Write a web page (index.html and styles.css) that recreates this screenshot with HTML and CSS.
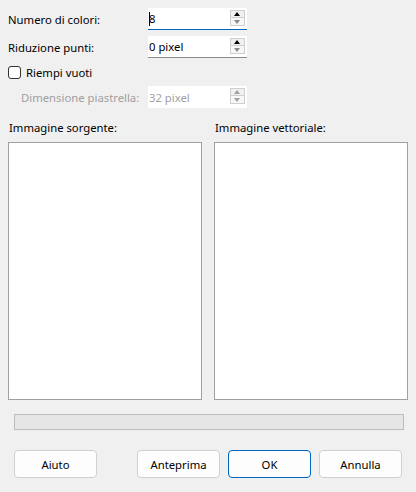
FILE: index.html
```html
<!DOCTYPE html>
<html lang="it">
<head>
<meta charset="utf-8">
<title>Vettorizza</title>
<link rel="stylesheet" href="styles.css">
</head>
<body>
<div class="dialog">
  <div class="row">
    <span class="label">Numero di colori:</span>
    <div class="spin focused">
      <span class="value"><span class="caret"></span>8</span>
      <span class="btns"><span class="up"></span><span class="down"></span></span>
    </div>
  </div>
  <div class="row">
    <span class="label">Riduzione punti:</span>
    <div class="spin">
      <span class="value">0 pixel</span>
      <span class="btns"><span class="up"></span><span class="down"></span></span>
    </div>
  </div>
  <div class="row check-row">
    <span class="checkbox"></span>
    <span class="check-label">Riempi vuoti</span>
  </div>
  <div class="row disabled">
    <span class="label indent">Dimensione piastrella:</span>
    <div class="spin">
      <span class="value">32 pixel</span>
      <span class="btns"><span class="up"></span><span class="down"></span></span>
    </div>
  </div>

  <div class="panels">
    <div class="panel">
      <div class="panel-title">Immagine sorgente:</div>
      <div class="panel-box"></div>
    </div>
    <div class="panel">
      <div class="panel-title">Immagine vettoriale:</div>
      <div class="panel-box"></div>
    </div>
  </div>

  <div class="progress"></div>

  <div class="buttons">
    <button class="btn">Aiuto</button>
    <div class="spacer"></div>
    <button class="btn">Anteprima</button>
    <button class="btn default">OK</button>
    <button class="btn">Annulla</button>
  </div>
</div>
</body>
</html>
```
FILE: styles.css
```css
html, body {
  margin: 0;
  padding: 0;
  background: #f0f0f0;
}
body {
  font-family: "Noto Sans", "Open Sans", sans-serif;
  font-size: 11.3px;
  color: #000;
  width: 416px;
  height: 492px;
  overflow: hidden;
}
.dialog {
  padding: 8px 0 0 0;
  display: flex;
  flex-direction: column;
}
.row {
  display: flex;
  align-items: center;
  height: 22px;
  padding-left: 8px;
  margin-bottom: 6px;
}
.label {
  width: 140px;
  flex: none;
}
.label.indent {
  padding-left: 13px;
  width: 127px;
}
.spin {
  position: relative;
  width: 99px;
  height: 22px;
  background: #fff;
  box-sizing: border-box;
  border-bottom: 1px solid #8a8a8a;
  display: flex;
  align-items: center;
}
.spin.focused {
  border-bottom: 1px solid #0067c0;
}
.value {
  padding-left: 1px;
  display: flex;
  align-items: center;
  position: relative;
}
.caret {
  position: absolute;
  left: 1px;
  top: 1px;
  width: 1px;
  height: 14px;
  background: #000;
}
.btns {
  position: absolute;
  left: 82px;
  top: 2px;
  width: 15px;
  display: flex;
  flex-direction: column;
}
.btns span {
  height: 8px;
  box-sizing: border-box;
  border: 1px solid #cfcfcf;
  background: #f0f0f0;
  position: relative;
}
.btns .down {
  border-top: none;
  background: #f7f7f7;
}
.btns .up::after,
.btns .down::after {
  content: "";
  position: absolute;
  left: 3px;
  width: 0;
  height: 0;
  border-left: 3.5px solid transparent;
  border-right: 3.5px solid transparent;
}
.btns .up::after {
  top: 1px;
  border-bottom: 4px solid #000;
}
.btns .down::after {
  top: 2px;
  border-top: 4px solid #8a8a8a;
}
.check-row {
  height: 14px;
  margin: 1px 0 7px 0;
}
.checkbox {
  width: 13px;
  height: 13px;
  box-sizing: border-box;
  border: 1px solid #333;
  border-radius: 3px;
  background: #fff;
  margin-right: 5px;
}
.disabled .label,
.disabled .value {
  color: #a0a0a0;
}
.disabled .spin {
  border-bottom: none;
}
.disabled .btns .up::after {
  border-bottom-color: #a0a0a0;
}
.disabled .btns .down::after {
  border-top-color: #a0a0a0;
}
.panels {
  display: flex;
  gap: 12px;
  padding: 7px 8px 0 8px;
}
.panel {
  width: 194px;
  display: flex;
  flex-direction: column;
}
.panel-title {
  height: 14px;
  line-height: 14px;
  padding-left: 1px;
  margin-bottom: 7px;
}
.panel-box {
  height: 258px;
  background: #fff;
  border: 1px solid #a0a0a0;
  box-sizing: border-box;
}
.progress {
  margin: 14px 12px 0 14px;
  height: 16px;
  box-sizing: border-box;
  background: #e6e6e6;
  border: 1px solid #bcbcbc;
}
.buttons {
  display: flex;
  gap: 8px;
  padding: 20px 14px 0 14px;
}
.spacer {
  width: 24px;
}
.btn {
  width: 83px;
  height: 28px;
  background: #fdfdfd;
  border: 1px solid #d0d0d0;
  border-radius: 4px;
  font-family: inherit;
  font-size: 11.3px;
  color: #000;
  padding: 0;
}
.btn.default {
  border: 1px solid #0067c0;
}
```
